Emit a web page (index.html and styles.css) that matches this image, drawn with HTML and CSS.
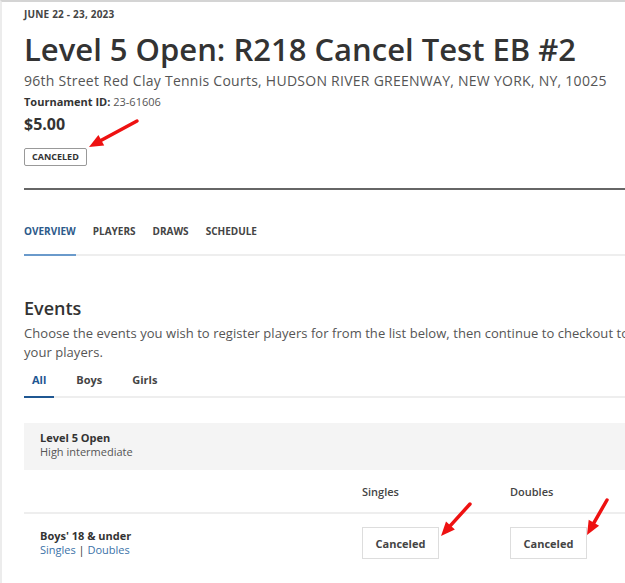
FILE: index.html
```html
<!DOCTYPE html>
<html lang="en">
<head>
<meta charset="UTF-8">
<meta name="viewport" content="width=device-width, initial-scale=1.0">
<title>Level 5 Open: R218 Cancel Test EB #2</title>
<link rel="stylesheet" href="styles.css">
</head>
<body>

  <div class="page">
    <header class="tournament">
      <div class="date">June 22 - 23, 2023</div>
      <h1>Level 5 Open: R218 Cancel Test EB #2</h1>
      <div class="address">96th Street Red Clay Tennis Courts, HUDSON RIVER GREENWAY, NEW YORK, NY, 10025</div>
      <div class="tid"><b>Tournament ID:</b> 23-61606</div>
      <div class="price">$5.00</div>
      <span class="badge">Canceled</span>
    </header>

    <nav class="tabs">
      <a href="#" class="active">Overview</a>
      <a href="#">Players</a>
      <a href="#">Draws</a>
      <a href="#">Schedule</a>
    </nav>

    <section class="events">
      <h2>Events</h2>
      <p>Choose the events you wish to register players for from the list below, then continue to checkout to add your players.</p>

      <div class="subtabs">
        <a href="#" class="active">All</a>
        <a href="#">Boys</a>
        <a href="#">Girls</a>
      </div>

      <div class="level">
        <div class="level-name">Level 5 Open</div>
        <div class="level-desc">High intermediate</div>
      </div>

      <div class="grid head">
        <div></div>
        <div class="col">Singles</div>
        <div class="col">Doubles</div>
      </div>
      <div class="grid row">
        <div class="label">
          <div class="division">Boys' 18 &amp; under</div>
          <div class="links"><a href="#">Singles</a> | <a href="#">Doubles</a></div>
        </div>
        <div><button class="state">Canceled</button></div>
        <div><button class="state">Canceled</button></div>
      </div>
    </section>
  </div>

  <!-- annotation arrows -->
  <svg class="marks" width="625" height="583" viewBox="0 0 625 583">
    <line x1="137" y1="121" x2="101.3" y2="140.3" />
    <polygon points="89,147 104.2,145.6 98.4,135" />
    <line x1="470" y1="504" x2="450.4" y2="525.6" />
    <polygon points="441,536 454.9,529.6 446,521.6" />
    <line x1="607" y1="500" x2="593.9" y2="522.8" />
    <polygon points="587,535 599.1,525.8 588.7,519.8" />
  </svg>

</body>
</html>
```

FILE: styles.css
```css
body {
  margin: 0;
  font-family: "Open Sans", sans-serif;
  color: #333;
  background-color: #fff;
  overflow: hidden;
}
.page {
  width: 660px;
  border-top: 2px solid #d4d4d4;
  border-left: 2px solid #ececec;
  padding-left: 22px;
  box-sizing: border-box;
  min-height: 583px;
}
.date {
  padding-top: 5px;
  font-size: 10px;
  line-height: 14px;
  font-weight: 700;
  text-transform: uppercase;
  letter-spacing: 0.2px;
  color: #444;
}
h1 {
  margin: 8px 0 0;
  font-size: 31px;
  line-height: 40px;
  font-weight: 600;
  color: #333;
}
.address {
  margin-top: 2px;
  font-size: 14px;
  line-height: 20px;
  letter-spacing: 0.26px;
  color: #555;
}
.tid {
  margin-top: 3px;
  font-size: 11px;
  line-height: 16px;
  color: #555;
}
.tid b {
  color: #333;
}
.price {
  margin-top: 4px;
  font-size: 16px;
  line-height: 20px;
  font-weight: 700;
}
.badge {
  display: inline-block;
  margin-top: 14px;
  height: 18px;
  padding: 0 7px;
  border: 1px solid #999;
  border-radius: 2px;
  box-sizing: border-box;
  font-size: 9px;
  line-height: 16px;
  font-weight: 700;
  text-transform: uppercase;
  color: #333;
}
.tournament {
  border-bottom: 2px solid #666;
  padding-bottom: 22px;
}
.tabs {
  display: flex;
  gap: 17px;
  margin-top: 34px;
  border-bottom: 2px solid #eee;
}
.tabs a {
  font-size: 10px;
  line-height: 14px;
  font-weight: 700;
  text-transform: uppercase;
  color: #444;
  text-decoration: none;
  padding-bottom: 16px;
  border-bottom: 2px solid transparent;
  margin-bottom: -2px;
}
.tabs a.active {
  color: #2d5a8a;
  border-bottom-color: #6a9acb;
}
h2 {
  margin: 40px 0 0;
  font-size: 18px;
  line-height: 24px;
  font-weight: 600;
  color: #333;
}
.events p {
  margin: 4px 0 0;
  font-size: 13px;
  line-height: 19px;
  letter-spacing: 0.05px;
  color: #555;
}
.subtabs {
  display: flex;
  gap: 14px;
  margin-top: 10px;
  border-bottom: 2px solid #eee;
}
.subtabs a {
  padding: 0 8px 8px;
  font-size: 11px;
  line-height: 16px;
  font-weight: 700;
  color: #444;
  text-decoration: none;
  border-bottom: 2px solid transparent;
  margin-bottom: -2px;
}
.subtabs a.active {
  color: #1f5792;
  border-bottom-color: #1f5792;
}
.level {
  margin-top: 25px;
  padding: 8px 16px 11px;
  background-color: #f4f4f4;
  font-size: 11px;
  line-height: 14px;
}
.level-name {
  font-weight: 700;
  color: #333;
}
.level-desc {
  color: #555;
}
.grid {
  display: grid;
  grid-template-columns: 338px 148px 148px;
}
.head {
  height: 42px;
  align-items: center;
  border-bottom: 2px solid #eee;
}
.col {
  font-size: 11px;
  font-weight: 600;
  color: #444;
}
.row {
  padding-top: 13px;
}
.label {
  padding: 2px 0 0 16px;
  font-size: 11px;
  line-height: 14px;
}
.division {
  font-weight: 700;
  color: #333;
}
.links {
  color: #333;
}
.links a {
  color: #3b72a8;
  text-decoration: none;
}
.state {
  width: 77px;
  height: 32px;
  padding: 0;
  border: 1px solid #ddd;
  background-color: #fff;
  font-family: inherit;
  font-size: 11px;
  font-weight: 700;
  color: #444;
  cursor: pointer;
}
.marks {
  position: absolute;
  top: 0;
  left: 0;
  pointer-events: none;
}
.marks line {
  stroke: #ee1111;
  stroke-width: 3.5;
  stroke-linecap: round;
}
.marks polygon {
  fill: #ee1111;
}
```
